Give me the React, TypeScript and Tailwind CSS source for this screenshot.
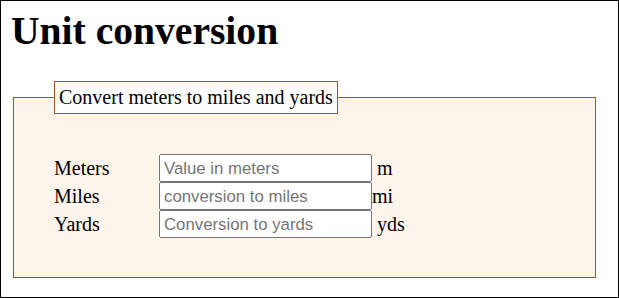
import React from "react";

const rows = [
  { label: "Meters", ph: "Value in meters", unit: "m", gap: true },
  { label: "Miles", ph: "conversion to miles", unit: "mi", gap: false },
  { label: "Yards", ph: "Conversion to yards", unit: "yds", gap: true },
];

export default function App() {
  return (
    <div className="w-[619px] h-[298px] border border-black bg-white overflow-hidden text-black [font-family:'Liberation_Serif',serif]">
      <h1 className="text-[39.6px] font-bold leading-[46px] ml-[10px] mt-[7px]">Unit conversion</h1>
      <fieldset className="mt-[27px] ml-[12px] w-[583px] h-[197px] border border-[#a0522d] bg-[#fdf4ec] pl-[40px] pt-[40px]">
        <legend className="border border-[#a0522d] bg-white px-[4px] py-[4px] text-[20px] leading-[23px]">
          Convert meters to miles and yards
        </legend>
        <div className="flex flex-col">
          {rows.map((r) => (
            <div key={r.label} className="flex items-center h-[28px] text-[20px]">
              <span className="w-[105px]">{r.label}</span>
              <input
                className="w-[213px] h-[28px] border border-[#767676] rounded-[2px] bg-white px-[4px] pt-[1px] text-[16.8px] placeholder:text-[#757575] [font-family:'Liberation_Sans',Arial,sans-serif]"
                placeholder={r.ph}
              />
              <span className={r.gap ? "ml-[5px]" : ""}>{r.unit}</span>
            </div>
          ))}
        </div>
      </fieldset>
    </div>
  );
}
